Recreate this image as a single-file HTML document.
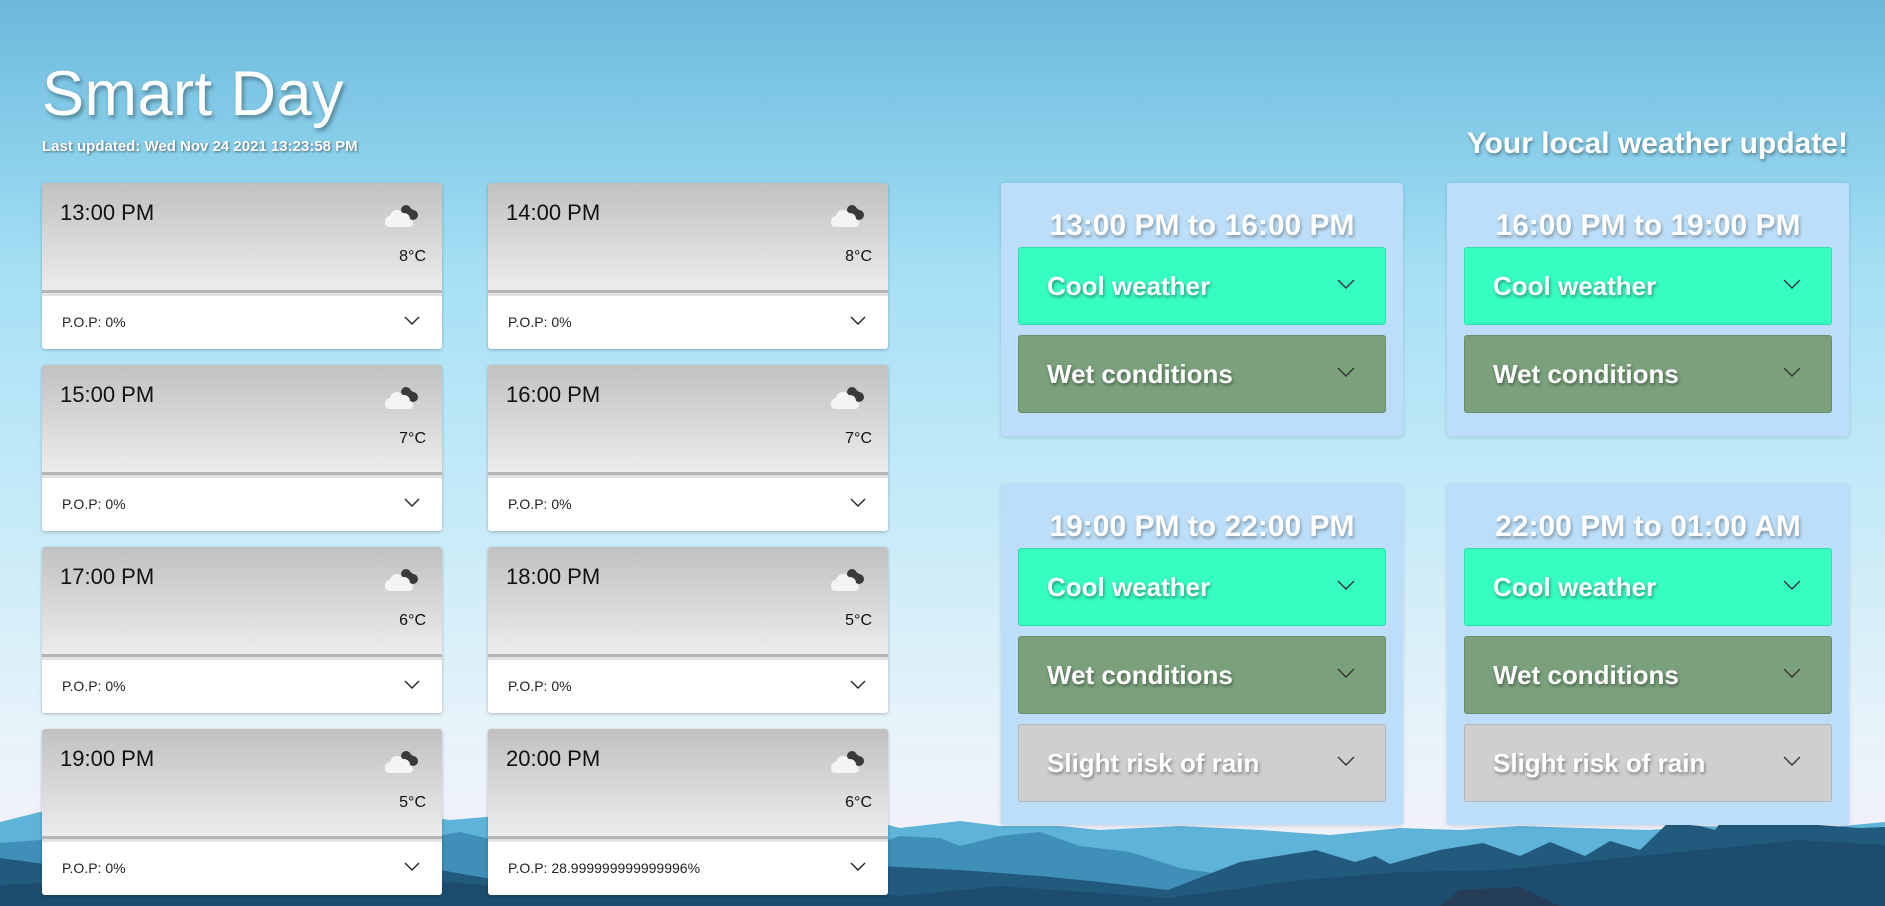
<!DOCTYPE html>
<html><head><meta charset="utf-8">
<style>
*{box-sizing:border-box;margin:0;padding:0}
html,body{width:1885px;height:906px;overflow:hidden}
body{font-family:"Liberation Sans",sans-serif;position:relative;
background:linear-gradient(180deg,#6cb9da 0%,#86cde9 15%,#a6e0f5 30%,#c4eaf8 55%,#e6f3fa 80%,#f1f1fa 92%,#eef0f8 100%);}
.bg{position:absolute;left:0;top:0;width:1885px;height:906px}
h1{position:absolute;left:42px;top:58px;font-size:63px;font-weight:normal;color:#fff;text-shadow:2px 3px 4px rgba(0,0,0,.35);letter-spacing:0.5px}
.upd{position:absolute;left:42px;top:138px;font-size:15px;font-weight:bold;color:#fff;text-shadow:1px 1px 2px rgba(0,0,0,.5)}
.tag{position:absolute;right:37px;top:127px;font-size:30px;font-weight:bold;color:#fff;text-shadow:1px 2px 3px rgba(0,0,0,.4)}
.card{position:absolute;width:400px;height:166px;box-shadow:0 1px 3px rgba(0,0,0,.25);background:#e2e2e2;border-radius:3px}
.hd{height:110px;background:linear-gradient(180deg,#c1c1c1,#ececec);border-bottom:3px solid #b5b5b5;position:relative;border-radius:3px 3px 0 0}
.hd .t{position:absolute;left:18px;top:17px;font-size:22px;color:#111}
.hd .tp{position:absolute;right:16px;top:65px;font-size:16px;color:#111}
.hd svg{position:absolute;left:342px;top:20px}
.ft{height:53px;background:#fff;position:relative;margin-top:3px;border-radius:0 0 3px 3px}
.ft span{position:absolute;left:20px;top:18px;font-size:14px;color:#222}
.chev{position:absolute}
.panel{position:absolute;width:402px;background:#bcdef8;border-radius:3px;box-shadow:0 1px 4px rgba(0,0,0,.15)}
.panel h2{text-align:center;font-weight:bold;font-size:30px;color:#fff;text-shadow:1px 2px 3px rgba(0,0,0,.35);margin-top:26px;height:38px}
.it{position:relative;margin:0 17px 10px 17px;height:78px;border:1px solid rgba(0,0,0,.12);border-radius:3px}
.it span{position:absolute;left:28px;top:23px;font-size:26px;font-weight:bold;color:#fff;text-shadow:1px 2px 3px rgba(0,0,0,.4)}
.it svg{position:absolute;right:30px;top:31px}
.c{background:#36fdc0}.w{background:#7aa17b}.s{background:#cfcfcf}
</style></head><body>
<svg class="bg" viewBox="0 0 1885 906" preserveAspectRatio="none">
<polygon fill="#5db3d8" points="0,822 40,812 90,818 130,806 170,815 230,808 300,818 380,810 450,820 520,814 600,818 680,810 760,818 840,812 900,828 960,821 1000,826 1060,826 1100,830 1180,826 1260,830 1330,835 1400,828 1460,830 1520,826 1580,828 1649,830 1700,826 1800,830 1885,822 1885,906 0,906"/>
<polygon fill="#3f8fb8" points="0,843 40,840 80,826 130,836 170,832 200,842 260,824 320,838 390,844 460,832 520,846 600,838 680,850 760,842 850,852 900,836 940,838 960,846 1000,836 1040,832 1080,846 1130,852 1180,868 1260,880 1885,880 1885,906 0,906"/>
<polygon fill="#225a7e" points="0,858 60,866 120,862 200,872 280,866 360,880 440,870 520,884 600,876 680,868 760,880 880,866 960,870 1040,876 1100,882 1168,890 1240,862 1316,850 1355,862 1375,856 1390,864 1440,850 1483,843 1520,856 1550,842 1585,856 1610,841 1640,850 1668,823 1700,826 1715,830 1720,823 1790,823 1860,828 1885,827 1885,906 0,906"/>
<polygon fill="#1c4d6f" points="0,885 150,878 300,890 450,882 600,894 760,884 900,896 1000,886 1168,898 1300,880 1400,872 1500,870 1600,860 1700,850 1800,840 1885,845 1885,906 0,906"/>
<polygon fill="#263d57" points="1440,906 1460,890 1520,887 1560,906"/>
</svg>
<h1>Smart Day</h1>
<div class="upd">Last updated: Wed Nov 24 2021 13:23:58 PM</div>
<div class="tag">Your local weather update!</div>

<div id="cards"></div>
<script>
var d=[["13:00 PM","8°C","0%"],["14:00 PM","8°C","0%"],["15:00 PM","7°C","0%"],["16:00 PM","7°C","0%"],["17:00 PM","6°C","0%"],["18:00 PM","5°C","0%"],["19:00 PM","5°C","0%"],["20:00 PM","6°C","28.999999999999996%"]];
var ic='<svg width="36" height="26" viewBox="0 0 36 26"><g fill="#3a3a3a"><circle cx="22" cy="7" r="5"/><circle cx="29" cy="12" r="5"/><circle cx="25" cy="10" r="5"/></g><g fill="#f4f4f4"><circle cx="13" cy="14" r="7"/><circle cx="20" cy="16" r="6"/><rect x="1" y="16" width="28" height="8" rx="4"/><circle cx="6" cy="18" r="5"/></g></svg>';
var ch='<svg class="chev" width="16" height="10" viewBox="0 0 16 10" style="right:22px;top:20px"><path d="M1 1 L8 8 L15 1" fill="none" stroke="#222" stroke-width="1.4"/></svg>';
var h='';
for(var i=0;i<8;i++){var x=i%2?488:42,y=183+Math.floor(i/2)*182;
h+='<div class="card" style="left:'+x+'px;top:'+y+'px"><div class="hd"><span class="t">'+d[i][0]+'</span>'+ic+'<span class="tp">'+d[i][1]+'</span></div><div class="ft"><span>P.O.P: '+d[i][2]+'</span>'+ch+'</div></div>';}
document.getElementById('cards').innerHTML=h;
</script>

<div id="panels"></div>
<script>
var pc='<svg width="18" height="10" viewBox="0 0 18 10"><path d="M1 1 L9 9 L17 1" fill="none" stroke="#333" stroke-width="1.4"/></svg>';
function it(c,t){return '<div class="it '+c+'"><span>'+t+'</span>'+pc+'</div>';}
var P=[[1001,183,253,"13:00 PM to 16:00 PM",0],[1447,183,253,"16:00 PM to 19:00 PM",0],[1001,484,341,"19:00 PM to 22:00 PM",1],[1447,484,341,"22:00 PM to 01:00 AM",1]];
var s='';
P.forEach(function(p){s+='<div class="panel" style="left:'+p[0]+'px;top:'+p[1]+'px;height:'+p[2]+'px"><h2>'+p[3]+'</h2>'+it('c','Cool weather')+it('w','Wet conditions')+(p[4]?it('s','Slight risk of rain'):'')+'</div>';});
document.getElementById('panels').innerHTML=s;
</script>
</body></html>
